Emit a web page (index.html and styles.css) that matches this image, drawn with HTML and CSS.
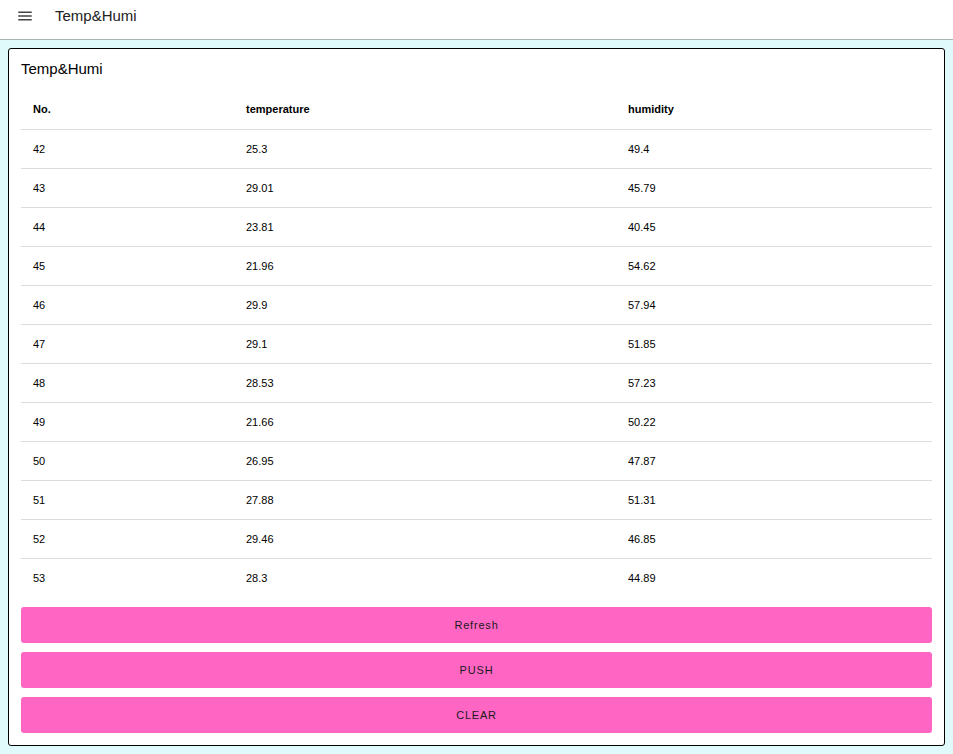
FILE: index.html
```
<!DOCTYPE html>
<html>
<head>
<meta charset="utf-8">
<link rel="stylesheet" href="styles.css">
</head>
<body>
<header class="appbar">
  <svg class="menu" width="18" height="18" viewBox="0 0 24 24"><path d="M3 18h18v-2H3v2zm0-5h18v-2H3v2zm0-7v2h18V6H3z" fill="#444"/></svg>
  <span class="apptitle">Temp&amp;Humi</span>
</header>
<main class="content">
  <section class="card">
    <h2 class="cardtitle">Temp&amp;Humi</h2>
    <table class="data">
      <colgroup><col class="c1"><col class="c2"><col class="c3"></colgroup>
      <thead><tr><th>No.</th><th>temperature</th><th>humidity</th></tr></thead>
      <tbody>
        <tr><td>42</td><td>25.3</td><td>49.4</td></tr>
        <tr><td>43</td><td>29.01</td><td>45.79</td></tr>
        <tr><td>44</td><td>23.81</td><td>40.45</td></tr>
        <tr><td>45</td><td>21.96</td><td>54.62</td></tr>
        <tr><td>46</td><td>29.9</td><td>57.94</td></tr>
        <tr><td>47</td><td>29.1</td><td>51.85</td></tr>
        <tr><td>48</td><td>28.53</td><td>57.23</td></tr>
        <tr><td>49</td><td>21.66</td><td>50.22</td></tr>
        <tr><td>50</td><td>26.95</td><td>47.87</td></tr>
        <tr><td>51</td><td>27.88</td><td>51.31</td></tr>
        <tr><td>52</td><td>29.46</td><td>46.85</td></tr>
        <tr><td>53</td><td>28.3</td><td>44.89</td></tr>
      </tbody>
    </table>
    <div class="actions">
      <button class="btn btn-plain">Refresh</button>
      <button class="btn">PUSH</button>
      <button class="btn">CLEAR</button>
    </div>
  </section>
</main>
</body>
</html>
```
FILE: styles.css
```
* { box-sizing: border-box; }
html, body { margin: 0; padding: 0; }
body {
  background: #e0f9fa;
  font-family: "Liberation Sans", Arial, sans-serif;
  color: #000;
}
.appbar {
  height: 40px;
  background: #fff;
  border-bottom: 1px solid #a9b4b5;
  display: flex;
  align-items: center;
  padding-left: 16px;
}
.menu { display: block; margin-top: -7px; }
.apptitle {
  margin-left: 21px;
  margin-top: -8px;
  font-size: 15px;
  color: #222;
}
.content { padding: 8px; }
.card {
  background: #fff;
  border: 1px solid #000;
  border-radius: 3px;
  padding: 10px 12px 12px 12px;
  height: 698px;
}
.cardtitle {
  margin: 0;
  font-size: 15px;
  font-weight: 400;
  line-height: 20px;
  height: 20px;
}
.data {
  width: 100%;
  border-collapse: collapse;
  font-size: 11px;
  margin-top: 11px;
}
.c1 { width: 213px; }
.c2 { width: 382px; }
.data th, .data td {
  text-align: left;
  padding: 0 12px;
  height: 39px;
  border-bottom: 1px solid #dcdcdc;
}
.data th { font-weight: 700; }
.data tbody tr:last-child td { border-bottom: none; height: 40px; }
.actions {
  display: flex;
  flex-direction: column;
  gap: 9px;
  margin-top: 9px;
}
.btn {
  height: 36px;
  border: none;
  border-radius: 3px;
  background: #ff66c4;
  font-family: "Liberation Sans", Arial, sans-serif;
  font-size: 11px;
  letter-spacing: 0.8px;
  color: #1a1a1a;
}
```
